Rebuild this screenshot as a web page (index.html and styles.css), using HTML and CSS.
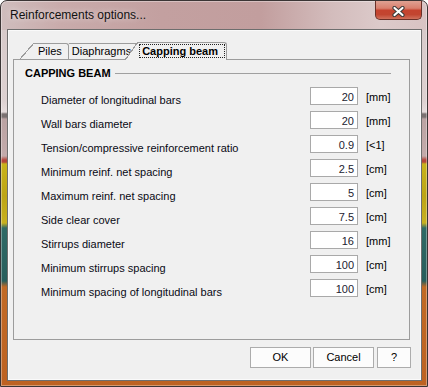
FILE: index.html
```html
<!DOCTYPE html>
<html>
<head>
<meta charset="utf-8">
<link rel="stylesheet" href="styles.css">
</head>
<body>
<div class="window">
  <div class="titlebar">
    <span class="title">Reinforcements options...</span>
    <span class="close"><svg width="13" height="11" viewBox="0 0 13 11"><path d="M2.5 2 L10.5 9 M10.5 2 L2.5 9" stroke="#3a3a3a" stroke-width="4.2" stroke-linecap="round"/><path d="M2.5 2 L10.5 9 M10.5 2 L2.5 9" stroke="#ffffff" stroke-width="2.2" stroke-linecap="round"/></svg></span>
  </div>
  <div class="client">
    <div class="tabs">
      <div class="tab tab-piles">Piles</div>
      <div class="tab tab-diaph">Diaphragms</div>
      <div class="tab tab-active"><span class="focus">Capping beam</span></div>
    </div>
    <div class="panel">
      <div class="section"><span class="section-title">CAPPING BEAM</span><span class="section-line"></span></div>
      <div class="rows">
        <span class="label">Diameter of longitudinal bars</span><span class="field">20</span><span class="unit">[mm]</span>
        <span class="label">Wall bars diameter</span><span class="field">20</span><span class="unit">[mm]</span>
        <span class="label">Tension/compressive reinforcement ratio</span><span class="field">0.9</span><span class="unit">[&lt;1]</span>
        <span class="label">Minimum reinf. net spacing</span><span class="field">2.5</span><span class="unit">[cm]</span>
        <span class="label">Maximum reinf. net spacing</span><span class="field">5</span><span class="unit">[cm]</span>
        <span class="label">Side clear cover</span><span class="field">7.5</span><span class="unit">[cm]</span>
        <span class="label">Stirrups diameter</span><span class="field">16</span><span class="unit">[mm]</span>
        <span class="label">Minimum stirrups spacing</span><span class="field">100</span><span class="unit">[cm]</span>
        <span class="label">Minimum spacing of longitudinal bars</span><span class="field">100</span><span class="unit">[cm]</span>
      </div>
    </div>
    <div class="buttons">
      <button class="btn btn-ok">OK</button>
      <button class="btn btn-cancel">Cancel</button>
      <button class="btn btn-help">?</button>
    </div>
  </div>
</div>
</body>
</html>
```
FILE: styles.css
```css
* { box-sizing: border-box; }
html, body { margin: 0; padding: 0; }
body {
  width: 428px;
  height: 387px;
  overflow: hidden;
  background: #ffffff;
  font-family: "Liberation Sans", Arial, sans-serif;
  font-size: 11px;
  color: #000;
}
.window {
  width: 428px;
  height: 387px;
  border: 1px solid #3b3535;
  border-radius: 7px 7px 0 0;
  padding: 0 5px 5px 6px;
  display: flex;
  flex-direction: column;
  box-shadow: inset 0 0 0 1px rgba(255,255,255,0.35);
  background:
    linear-gradient(to right, #cfbdbd 0px, #c9abab 60px, #c3a0a0 160px, #c29e9e 260px, #d3bcbc 330px, #dccaca 380px, #d8c3c3 428px) top left / 100% 29px no-repeat,
    linear-gradient(to bottom, #d6c8c8 0px, #ddd1d1 100px, #e6dcdc 111px, #7a7171 113px, #7a7171 116px, #bba3a3 118px, #c3abab 155px, #b5473c 159px, #b5473c 161px, #c9b31c 163px, #bda516 195px, #c8b020 222px, #2f6a66 227px, #285e5c 280px, #c16a26 286px, #bd6222 387px);
}
.titlebar {
  height: 28px;
  display: flex;
  justify-content: space-between;
  align-items: flex-start;
}
.title {
  font-size: 12px;
  line-height: 28px;
  padding-left: 3px;
  color: #111;
  text-shadow: 0 0 6px rgba(255,255,255,0.7);
}
.close {
  width: 47px;
  height: 19px;
  border: 1px solid #6a3028;
  border-top: none;
  border-radius: 0 0 5px 5px;
  background: linear-gradient(#dfa193 0%, #d9806e 40%, #c5432f 52%, #c24530 75%, #d0705c 100%);
  display: flex;
  align-items: center;
  justify-content: center;
  padding-top: 2px;
}
.close svg { display: block; }
.client {
  height: 352px;
  border: 1px solid #6e6e6e;
  padding: 1px;
  box-shadow: inset 0 0 0 1px #fafafa;
  background: #f0f0f0;
  display: flex;
  flex-direction: column;
}
.tabs {
  display: flex;
  align-items: flex-end;
  height: 17px;
  margin: 11px 0 0 25px;
  position: relative;
  z-index: 1;
}
.tab {
  position: relative;
  height: 16px;
  border-top: 1px solid #9c9c9c;
  line-height: 14px;
  white-space: nowrap;
}
.tab-piles {
  border-right: 1px solid #9c9c9c;
  border-top-right-radius: 3px;
  padding: 0 6px 0 4px;
}
.tab-piles::before {
  content: "";
  position: absolute;
  left: -14px;
  top: -1px;
  width: 14px;
  height: 16px;
  background: linear-gradient(to bottom right, transparent calc(50% - 0.6px), #9c9c9c calc(50% - 0.6px), #9c9c9c calc(50% + 0.6px), transparent calc(50% + 0.6px));
}
.tab-diaph {
  padding: 0 7px 0 3px;
}
.tab-active {
  height: 18px;
  margin-bottom: -1px;
  background: #f0f0f0;
  border-right: 1px solid #9c9c9c;
  border-top-right-radius: 3px;
  padding: 1px 1px 0 1px;
  z-index: 2;
}
.tab-active::before {
  content: "";
  position: absolute;
  left: -13px;
  top: -1px;
  width: 13px;
  height: 18px;
  background: linear-gradient(to bottom right, transparent calc(50% - 0.6px), #9c9c9c calc(50% - 0.6px), #9c9c9c calc(50% + 0.6px), #f0f0f0 calc(50% + 0.6px));
}
.focus {
  display: block;
  border: 1px dotted #222;
  padding: 0 6px 0 2px;
  line-height: 12px;
  font-weight: bold;
}
.panel {
  margin-left: 4px;
  width: 397px;
  height: 281px;
  border: 1px solid #9c9c9c;
  display: flex;
  flex-direction: column;
}
.section {
  display: flex;
  align-items: center;
  height: 13px;
  margin: 7px 18px 0 11px;
}
.section-title {
  font-weight: bold;
  line-height: 13px;
}
.section-line {
  flex: 1;
  border-top: 1px solid #a0a0a0;
  margin-left: 4px;
}
.rows {
  display: grid;
  grid-template-columns: 269px 48px auto;
  grid-auto-rows: 18px;
  row-gap: 6px;
  margin-top: 7px;
  padding-left: 27px;
}
.label {
  line-height: 14px;
  padding-top: 6px;
  white-space: nowrap;
  color: #0a0a14;
}
.field {
  height: 18px;
  border: 1px solid #a9a9a9;
  background: #fff;
  text-align: right;
  padding: 2px 3px 0 0;
  line-height: 14px;
  color: #222230;
}
.unit {
  line-height: 14px;
  padding: 3px 0 0 8px;
}
.buttons {
  display: flex;
  justify-content: flex-end;
  margin: 7px 9px 0 0;
}
.btn {
  height: 21px;
  border: 1px solid #acacac;
  background: #fcfcfc;
  font-family: "Liberation Sans", Arial, sans-serif;
  font-size: 11px;
  color: #000;
  padding: 0;
  line-height: 19px;
}
.btn-ok { width: 61px; margin-right: 2px; }
.btn-cancel { width: 61px; margin-right: 3px; }
.btn-help { width: 34px; }
```
